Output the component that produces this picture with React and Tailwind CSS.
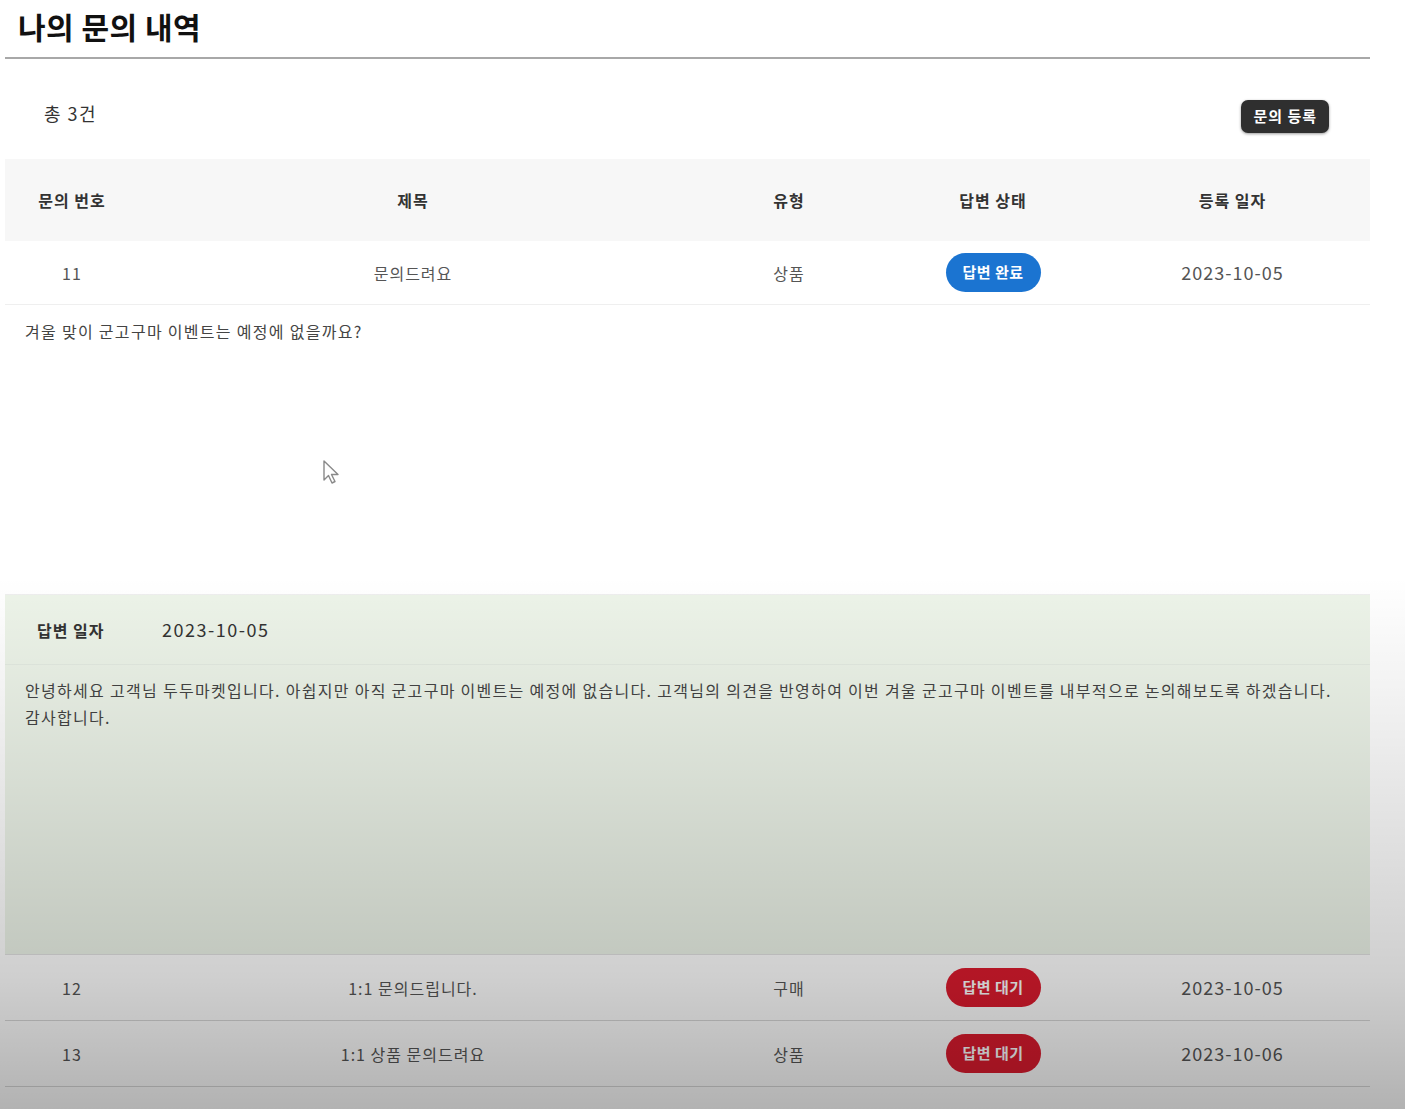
import React from 'react';

const inquiries = [
  {
    id: 11,
    title: '문의드려요',
    type: '상품',
    answered: true,
    date: '2023-10-05',
    question: '겨울 맞이 군고구마 이벤트는 예정에 없을까요?',
    answerDate: '2023-10-05',
    answer:
      '안녕하세요 고객님 두두마켓입니다. 아쉽지만 아직 군고구마 이벤트는 예정에 없습니다. 고객님의 의견을 반영하여 이번 겨울 군고구마 이벤트를 내부적으로 논의해보도록 하겠습니다. 감사합니다.',
  },
  { id: 12, title: '1:1 문의드립니다.', type: '구매', answered: false, date: '2023-10-05' },
  { id: 13, title: '1:1 상품 문의드려요', type: '상품', answered: false, date: '2023-10-06' },
];

const cols = 'grid grid-cols-[134px_548px_204px_204px_275px]';

const StatusBadge = ({ answered }) => (
  <span
    className={`inline-flex items-center justify-center w-[95px] h-[39px] rounded-full text-white text-[15px] font-bold tracking-[0.5px] ${
      answered ? 'bg-[#1b74d1]' : 'bg-[#dc1b2e]'
    }`}
  >
    {answered ? '답변 완료' : '답변 대기'}
  </span>
);

const Cursor = () => (
  <svg className="absolute left-[322px] top-[459px] w-[20px] h-[26px] pointer-events-none" viewBox="0 0 20 26">
    <path d="M2 2 L2 21 L6.5 16.5 L10 24 L13 22.5 L9.5 15.5 L16 15.5 Z" fill="#fff" stroke="#8a8a8a" strokeWidth="1.4" strokeLinejoin="round" />
  </svg>
);

export default function App() {
  return (
    <div className="relative min-h-[1109px] bg-white overflow-hidden font-['Noto_Sans_CJK_KR','Noto_Sans',sans-serif]">
      <div className="ml-[5px] w-[1365px]">
        {/* Title */}
        <div className="pl-[13px] pt-[6px] pb-[11px] border-b-2 border-[#a8a8a8]">
          <h1 className="text-[30px] font-bold text-[#111] leading-[40px] tracking-[0.5px]">나의 문의 내역</h1>
        </div>

        {/* Count + register */}
        <div className="h-[100px] pt-2 flex items-center justify-between pl-[39px] pr-[41px]">
          <span className="text-[18px] text-[#333] tracking-[1.5px]">총 3건</span>
          <button className="mt-[6px] h-[33px] px-[12px] rounded-[7px] bg-[#2f2f2f] text-white text-[15px] font-bold tracking-[1px] shadow-[0_1px_3px_rgba(0,0,0,0.4)]">
            문의 등록
          </button>
        </div>

        {/* Table header */}
        <div className={`${cols} h-[82px] items-center bg-[#f7f7f7] text-[16px] font-bold text-[#333] text-center tracking-[1px]`}>
          <div>문의 번호</div>
          <div>제목</div>
          <div>유형</div>
          <div>답변 상태</div>
          <div>등록 일자</div>
        </div>

        {inquiries.map((q) => (
          <div key={q.id}>
            <div className={`${cols} ${q.question ? 'h-[64px] border-[#efefef]' : 'h-[66px] border-[#d8d8d8]'} items-center border-b text-center text-[16px] text-[#555] tracking-[1px]`}>
              <div>{q.id}</div>
              <div>{q.title}</div>
              <div>{q.type}</div>
              <div>
                <StatusBadge answered={q.answered} />
              </div>
              <div className="text-[18px] tracking-[1px]">{q.date}</div>
            </div>

            {q.question && (
              <>
                <div className="h-[290px] px-[20px] pt-[14px] text-[16px] tracking-[1.3px] text-[#444] border-b border-[#eeeeee]">
                  {q.question}
                </div>
                <div className="h-[360px] bg-[#edf4e9] border-b border-[#e2e2e2]">
                  <div className="h-[70px] flex items-center gap-[38px] pl-[32px] border-b border-[#e4ebe2]">
                    <span className="text-[16px] font-bold text-[#333] w-[87px] tracking-[1px]">답변 일자</span>
                    <span className="text-[18px] text-[#333] tracking-[1.5px]">{q.answerDate}</span>
                  </div>
                  <p className="px-[20px] pt-[12px] text-[16px] leading-[27px] tracking-[1.3px] text-[#444]">{q.answer}</p>
                </div>
              </>
            )}
          </div>
        ))}
      </div>

      <Cursor />

      {/* video frame darkening */}
      <div className="absolute inset-0 pointer-events-none bg-[linear-gradient(to_bottom,transparent_52%,rgba(0,0,0,0.06)_64%,rgba(0,0,0,0.19)_88%,rgba(0,0,0,0.3)_100%)]" />
    </div>
  );
}
